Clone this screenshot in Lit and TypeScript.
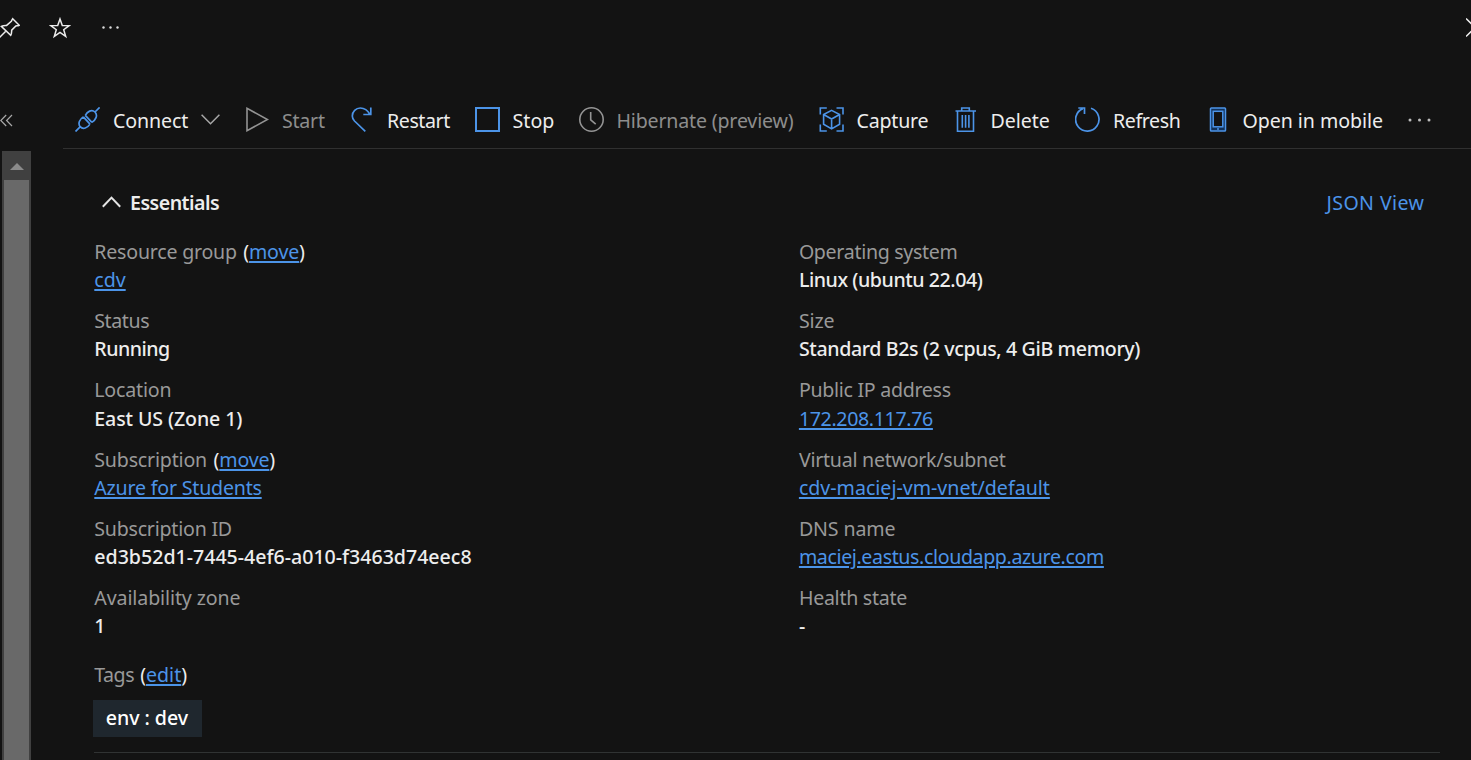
import { LitElement, html, css, nothing, TemplateResult } from "lit";
import { customElement } from "lit/decorators.js";

/** A run of text: content, letter spacing in px, and the width it occupies. */
interface Run { s: string; ls: number; w: number; }
const run = (s: string, ls: number, w: number): Run => ({ s, ls, w });

interface Field { label: Run; action?: Run; value: Run; link?: boolean; }
interface Command { icon: TemplateResult; text: Run; after: number; disabled?: boolean; menu?: boolean; }

const blue = "#4c94e8";
const grey = "#949494";

const icons = {
  pin: html`<svg width="20" height="24" viewBox="0 0 20 24" fill="none" stroke="#ececec" stroke-width="1.5"><path d="M-.5 21.5l6-6M12.700 2.700l6.500 6.500c-1.500.7-2.400.5-3.300.8l-4.200 4.200c-.2 1.500.2 3.200-1 5.200L1.300 10.400c2-1.200 3.600-1 5.300-1l4.700-4c.4-.8.5-1.700 1.400-2.700z"/></svg>`,
  connect: html`<svg width="25" height="25" viewBox="0 0 25 25" fill="none" stroke=${blue} stroke-width="1.700"><path d="M.5 24.500l4.600-4.600M20 5l4.600-4.600M10.300 8.300l6.600 7.100M8.300 9.900l6.700 7.200M8.300 9.900C5 12 2.500 16 5.100 19.700c3.100 3.200 7.400 1.200 9.900-2.600M10.300 8.300c2-3.600 6.300-6.500 9.700-3.300 3.200 3.600.6 8-3.100 10.400"/></svg>`,
  start: html`<svg width="25" height="25" viewBox="0 0 25 25" fill="none" stroke=${grey} stroke-width="1.600"><path d="M3 1.300v22.400L23.500 12.500z"/></svg>`,
  restart: html`<svg width="25" height="25" viewBox="0 0 25 25" fill="none" stroke=${blue} stroke-width="1.700"><path d="M16.300 24.300L5.500 14C4 12.500 3.300 11 3.300 9a8 8 0 0 1 8-8c4.500 0 7.500 2.500 9.700 6.500M21.800.5v7h-7.500"/></svg>`,
  stop: html`<svg width="25" height="25" viewBox="0 0 25 25" fill="none" stroke=${blue} stroke-width="2"><path d="M1 1h23v23H1z"/></svg>`,
  clock: html`<svg width="25" height="25" viewBox="0 0 25 25" fill="none" stroke=${grey} stroke-width="1.600"><circle cx="12.500" cy="12.500" r="11.700"/><path d="M11.700 5v7.800l5 4.400"/></svg>`,
  capture: html`<svg width="25" height="25" viewBox="0 0 25 25" fill="none" stroke=${blue} stroke-width="1.600"><path d="M1.300 7.500V1h6.500M17.500 1H24v6.500M24 17.500V24h-6.500M7.800 24H1.300v-6.500M12.600 3.400l8 4.100v9.800l-8 4.600-8-4.600V7.500zM4.600 7.500l8 4.500 8-4.500M12.600 12v9.700"/></svg>`,
  trash: html`<svg width="25" height="25" viewBox="0 0 25 25" fill="none" stroke=${blue} stroke-width="1.600"><path d="M2.500 4h20.500M8.700 4V1h7.600v3M4.500 4v20.200h16V4M9.300 8v12.700M12.600 8v12.700M15.900 8v12.700"/></svg>`,
  refresh: html`<svg width="25" height="25" viewBox="0 0 25 25" fill="none" stroke=${blue} stroke-width="1.700"><path d="M16 1.300a11.700 11.700 0 1 1-8.200.3M3.300 1h6.200v6"/></svg>`,
  mobile: html`<svg width="25" height="25" viewBox="0 0 25 25" stroke=${blue} stroke-width="1.500"><rect x="5.500" y="1" width="15" height="23" rx=".8" fill="#12325a"/><rect x="8.200" y="4.300" width="9.600" height="15.500" fill="#131313"/><path d="M12 22h2"/></svg>`,
};

const commands: Command[] = [
  { icon: icons.connect, text: run("Connect", -0.09, 88.5), after: 42.5, menu: true },
  { icon: icons.start, text: run("Start", -0.25, 43), after: 24.5, disabled: true },
  { icon: icons.restart, text: run("Restart", -0.42, 64), after: 24 },
  { icon: icons.stop, text: run("Stop", 0.05, 42), after: 24.5 },
  { icon: icons.clock, text: run("Hibernate (preview)", -0.18, 178), after: 24.5, disabled: true },
  { icon: icons.capture, text: run("Capture", -0.2, 72), after: 24.5 },
  { icon: icons.trash, text: run("Delete", -0.05, 60), after: 25 },
  { icon: icons.refresh, text: run("Refresh", -0.4, 68), after: 24 },
  { icon: icons.mobile, text: run("Open in mobile", -0.06, 140.8), after: 24.8 },
];

const left: Field[] = [
  { label: run("Resource group", -0.22, 143), action: run("move", -0.199, 50), value: run("cdv", -0.007, 31.4), link: true },
  { label: run("Status", -0.43, 55), value: run("Running", -0.5, 76) },
  { label: run("Location", -0.2, 77.5), value: run("East US (Zone 1)", -0.12, 149) },
  { label: run("Subscription", -0.19, 113.3), action: run("move", -0.199, 50), value: run("Azure for Students", -0.204, 167.4), link: true },
  { label: run("Subscription ID", -0.23, 138), value: run("ed3b52d1-7445-4ef6-a010-f3463d74eec8", -0.01, 377.5) },
  { label: run("Availability zone", -0.12, 146.7), value: run("1", 0, 11) },
];

const right: Field[] = [
  { label: run("Operating system", -0.32, 159.5), value: run("Linux (ubuntu 22.04)", -0.44, 185.5) },
  { label: run("Size", -0.1, 36), value: run("Standard B2s (2 vcpus, 4 GiB memory)", -0.37, 343) },
  { label: run("Public IP address", -0.29, 152.5), value: run("172.208.117.76", -0.36, 134), link: true },
  { label: run("Virtual network/subnet", -0.26, 207), value: run("cdv-maciej-vm-vnet/default", -0.002, 251), link: true },
  { label: run("DNS name", -0.13, 97), value: run("maciej.eastus.cloudapp.azure.com", -0.378, 305), link: true },
  { label: run("Health state", -0.28, 108.5), value: run("-", 0, 8) },
];

const text = (r: Run, cls = "") =>
  html`<span class="run ${cls}" style="width:${r.w}px;letter-spacing:${r.ls}px">${r.s}</span>`;

const labelRow = (label: Run, action?: Run) => html`
  <div class="line label">${text(label)}${action
    ? html`<span class="paren open">(</span>${text(action, "link")}<span class="paren">)</span>`
    : nothing}</div>`;

const field = (f: Field) => html`
  <div class="field">
    ${labelRow(f.label, f.action)}
    <div class="line value">${text(f.value, f.link ? "link" : "")}</div>
  </div>`;

@customElement("app-root")
export class AppRoot extends LitElement {
  static styles = css`
    :host {
      display: grid;
      grid-template-rows: 92px 668px;
      height: 760px;
      overflow: hidden;
      background: #131313;
      color: #ededed;
      font-family: "Noto Sans", sans-serif;
      font-size: 19.6px;
      line-height: 28.2px;
      white-space: nowrap;
    }
    svg { display: block; flex: none; }
    .header { display: flex; align-items: center; height: 56px; }
    .star { margin-left: 29px; margin-right: 31px; }
    .close { margin-left: auto; }
    .body { display: grid; grid-template-columns: 63px 1fr; }
    .side { display: flex; flex-direction: column; }
    .collapse { height: 59px; box-sizing: border-box; padding-top: 22px; }
    .track { width: 29px; margin-left: 2px; flex: 1; background: #404040; display: flex; flex-direction: column; align-items: center; }
    .up { height: 29px; box-sizing: border-box; padding-top: 12px; }
    .thumb { width: 25px; flex: 1; background: #696969; }
    .toolbar { display: flex; align-items: center; height: 56px; padding-left: 12px; border-bottom: 1px solid #303030; }
    .command { display: flex; align-items: center; flex: none; }
    .command .run { margin-left: 13px; margin-right: -.5px; padding-top: 2px; }
    .disabled { color: #8d8d8d; }
    .run { display: block; flex: none; }
    .chevron { margin-right: -18.5px; }
    .content { padding: 40px 31px 0 31px; }
    .heading { display: flex; align-items: center; height: 28px; padding: 0 16px 0 8px; }
    .heading svg { margin-bottom: 2px; }
    .heading .title { margin-left: 9px; font-weight: 600; }
    .heading .json { margin-left: auto; color: #4c94e8; }
    .columns { display: grid; grid-template-columns: 704.6px 1fr; padding-top: 21.1px; }
    .column { display: grid; grid-auto-rows: 56.4px; row-gap: 12.8px; padding-left: .3px; }
    .line { display: flex; height: 28.2px; }
    .label { color: #999; }
    .value { font-weight: 500; }
    .link { color: #4c94e8; font-weight: 400; text-decoration: underline; text-decoration-thickness: 2px; text-underline-offset: 2px; }
    .paren { color: #ededed; width: 6px; }
    .open { margin-left: 5.9px; margin-right: -.2px; }
    .tags { padding: 20.8px 0 0 .3px; }
    .chip { display: flex; align-items: center; box-sizing: border-box; width: 109px; height: 37px; margin: 10.1px 0 0 -1.3px; padding-left: 12.8px; background: #1f272e; color: #fff; font-weight: 500; }
    .rule { height: 1px; margin-top: 15px; background: #303333; }
  `;

  render() {
    return html`
      <header class="header">
        ${icons.pin}
        <svg class="star" width="22" height="22" viewBox="0 0 22 22" fill="none" stroke="#ececec" stroke-width="1.5"><path d="M11 2l2.300 6.500 6.900.1-5.500 4.150 2 6.650L11 15.500l-5.700 3.900 2-6.650L1.800 8.600l6.900-.1z"/></svg>
        <svg width="18" height="4" viewBox="0 0 18 4" fill="#dcdcdc"><circle cx="1.500" cy="1.500" r="1.200"/><circle cx="8.500" cy="1.500" r="1.200"/><circle cx="15.500" cy="1.500" r="1.200"/></svg>
        <svg class="close" width="5" height="20" viewBox="0 0 5 20" fill="none" stroke="#ececec" stroke-width="1.500"><path d="M0 .5L9.200 9.500 0 18.500"/></svg>
      </header>
      <div class="body">
        <aside class="side">
          <div class="collapse"><svg width="14" height="13" viewBox="0 0 14 13" fill="none" stroke="#a8a8a8" stroke-width="1.200"><path d="M6.200 1L.8 6.500l5.400 5.500M12 1L6.600 6.500 12 12"/></svg></div>
          <div class="track">
            <div class="up"><svg width="14" height="7" viewBox="0 0 14 7" fill="#8a8a8a"><path d="M0 7l7-7 7 7z"/></svg></div>
            <div class="thumb"></div>
          </div>
        </aside>
        <main>
          <nav class="toolbar">
            ${commands.map(c => html`
              <div class="command ${c.disabled ? "disabled" : ""}" style="margin-right:${c.after}px">
                ${c.icon}${text(c.text)}${c.menu
                  ? html`<svg class="chevron" width="19" height="11" viewBox="0 0 19 11" fill="none" stroke="#a8a8a8" stroke-width="1.500"><path d="M.6.8l8.900 8.900L18.400.8"/></svg>`
                  : nothing}
              </div>`)}
            <svg width="25" height="4" viewBox="0 0 25 4" fill="#bdbdbd"><circle cx="2" cy="2" r="1.500"/><circle cx="11.500" cy="2" r="1.500"/><circle cx="21" cy="2" r="1.500"/></svg>
          </nav>
          <section class="content">
            <div class="heading">
              <svg width="19" height="12" viewBox="0 0 19 12" fill="none" stroke="#e4e4e4" stroke-width="2"><path d="M.8 10.800L9.500 1.600l8.700 9.200"/></svg>
              ${text(run("Essentials", -0.52, 90), "title")}
              ${text(run("JSON View", 0.4, 97.5), "json")}
            </div>
            <div class="columns">
              <div class="column">${left.map(field)}</div>
              <div class="column">${right.map(field)}</div>
            </div>
            <div class="tags">
              ${labelRow(run("Tags", -0.5, 40), run("edit", -0.009, 35.2))}
              <div class="chip">${text(run("env : dev", -0.06, 82.5))}</div>
            </div>
            <div class="rule"></div>
          </section>
        </main>
      </div>`;
  }
}
